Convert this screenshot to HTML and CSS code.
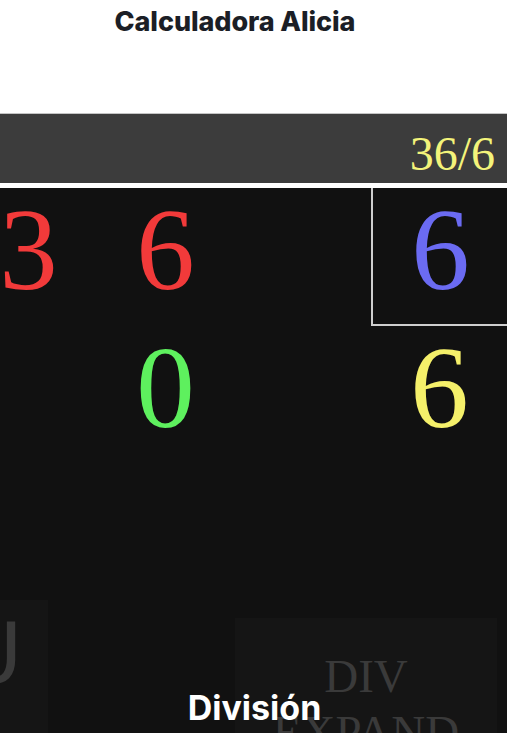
FILE: index.html
```html
<!DOCTYPE html>
<html lang="es">
<head>
<meta charset="utf-8">
<title>Calculadora Alicia</title>
<link rel="stylesheet" href="styles.css">
</head>
<body>
<div class="page">
  <h1 class="title">Calculadora Alicia</h1>
  <div class="display">36/6</div>
  <div class="board">
    <div class="grid">
      <div class="cell red">3</div>
      <div class="cell red">6</div>
      <div class="cell"></div>
      <div class="cell blue box">6</div>
      <div class="cell"></div>
      <div class="cell green">0</div>
      <div class="cell"></div>
      <div class="cell yellow">6</div>
    </div>
    <div class="keys">
      <div class="key key-left"><span class="key-u">U</span></div>
      <div class="key key-div"><span>DIV</span><span>EXPAND</span></div>
    </div>
    <div class="caption">División</div>
  </div>
</div>
</body>
</html>
```
FILE: styles.css
```css
html, body {
  margin: 0;
  padding: 0;
  background: #ffffff;
}
.page {
  width: 507px;
  height: 738px;
  overflow: hidden;
}
.title {
  margin: 0;
  height: 113px;
  padding-top: 6px;
  box-sizing: border-box;
  text-align: center;
  font-family: Inter, "Liberation Sans", sans-serif;
  font-weight: 800;
  font-size: 27px;
  line-height: 32px;
  letter-spacing: -0.1px;
  color: #1b1e26;
  padding-right: 37px;
}
.display {
  height: 70px;
  box-sizing: border-box;
  border-top: 1px solid #c4c4c4;
  background: #3c3c3c;
  color: #f3f37a;
  font-family: "Liberation Serif", serif;
  font-size: 48px;
  line-height: 70px;
  text-align: right;
  padding-right: 12px;
  padding-top: 5px;
  margin-bottom: 5px;
}
.board {
  position: relative;
  height: 545px;
  background: #111111;
  overflow: hidden;
}
.grid {
  display: grid;
  grid-template-columns: repeat(4, 137px);
  grid-template-rows: 138px 138px;
  margin-left: -40px;
}
.cell {
  font-family: "Liberation Serif", serif;
  font-size: 117px;
  line-height: 124px;
  text-align: center;
}
.box {
  border-left: 2px solid #cfcfcf;
  border-bottom: 2px solid #cfcfcf;
  box-sizing: border-box;
}
.red { color: #f23a3a; }
.blue { color: #6b6bf2; }
.green { color: #5ef05e; }
.yellow { color: #f5f06a; }
.keys {
  display: flex;
  align-items: flex-start;
  margin-top: 136px;
}
.key {
  background: #151515;
  height: 140px;
}
.key-left {
  width: 48px;
  overflow: hidden;
}
.key-u {
  display: block;
  font-family: "DejaVu Sans", sans-serif;
  font-size: 84px;
  line-height: 100px;
  color: #3a3a3a;
  margin-left: -39px;
  margin-top: 4px;
}
.key-div {
  margin-left: 187px;
  margin-top: 18px;
  width: 262px;
  display: flex;
  flex-direction: column;
  align-items: center;
  padding-top: 30px;
  box-sizing: border-box;
  font-family: "Liberation Serif", serif;
  font-size: 47px;
  line-height: 56px;
  color: #3a3a3a;
}
.caption {
  position: absolute;
  left: 0;
  right: 0;
  top: 500px;
  text-align: center;
  padding-left: 2px;
  font-family: Inter, "Liberation Sans", sans-serif;
  font-weight: 700;
  font-size: 34px;
  line-height: 40px;
  color: #ffffff;
}
```
